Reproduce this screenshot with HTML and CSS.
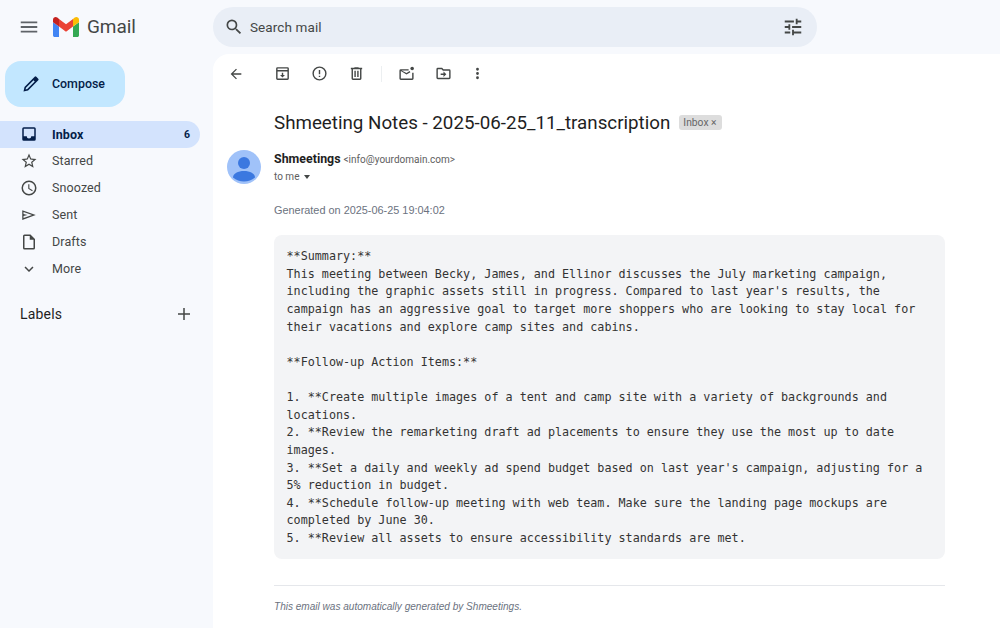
FILE: index.html
```html
<!DOCTYPE html>
<html lang="en">
<head>
<meta charset="utf-8">
<title>Gmail</title>
<link rel="stylesheet" href="styles.css">
</head>
<body>
<div class="app">
  <aside class="sidebar">
    <div class="brand">
      <svg class="menu-icon" viewBox="0 0 24 24" width="22" height="22"><path d="M3 18h18v-2H3v2zm0-5h18v-2H3v2zm0-7v2h18V6H3z" fill="#5f6368"/></svg>
      <svg class="logo" viewBox="0 0 26 20" width="26" height="20">
        <path d="M1.8 20H6V9.6L0 5.2V18.2C0 19.2.8 20 1.8 20Z" fill="#4285f4"/>
        <path d="M20 20h4.2c1 0 1.8-.8 1.8-1.8V5.2L20 9.6V20Z" fill="#34a853"/>
        <path d="M20 2v7.6l6-4.4V2.8C26 .6 23.5-.7 21.700.6L20 2Z" fill="#fbbc04"/>
        <path d="M6 9.600V2l7 5.200L20 2v7.600l-7 5.200L6 9.600Z" fill="#ea4335"/>
        <path d="M0 2.800v2.400l6 4.400V2L4.300.6C2.500-.7 0 .6 0 2.800Z" fill="#c5221f"/>
      </svg>
      <span class="wordmark">Gmail</span>
    </div>
    <button class="compose">
      <svg viewBox="0 0 24 24" width="20" height="20"><path d="M20.700 5.600 18.400 3.300a1.400 1.400 0 0 0-2 0L4.200 15.500 3 21l5.500-1.200L20.700 7.600a1.400 1.400 0 0 0 0-2ZM7.500 18l-2 .5.500-2 9-9 1.500 1.500-9 9Z" fill="#041e49"/></svg>
      <span>Compose</span>
    </button>
    <nav class="nav">
      <a class="nav-item active">
        <svg viewBox="0 0 24 24" width="18" height="18"><path d="M19 3H5a2 2 0 0 0-2 2v14a2 2 0 0 0 2 2h14a2 2 0 0 0 2-2V5a2 2 0 0 0-2-2Zm0 12h-4a3 3 0 0 1-6 0H5V5h14v10Z" fill="#041e49"/></svg>
        <span class="nav-label">Inbox</span><span class="count">6</span>
      </a>
      <a class="nav-item">
        <svg viewBox="0 0 24 24" width="18" height="18"><path d="m22 9.240-7.190-.620L12 2 9.190 8.630 2 9.240l5.460 4.730L5.820 21 12 17.270 18.180 21l-1.630-7.030L22 9.240ZM12 15.400l-3.760 2.270 1-4.280-3.320-2.880 4.380-.38L12 6.100l1.710 4.040 4.380.38-3.320 2.880 1 4.280L12 15.400Z" fill="#444746"/></svg>
        <span class="nav-label">Starred</span>
      </a>
      <a class="nav-item">
        <svg viewBox="0 0 24 24" width="18" height="18"><path d="M12 2a10 10 0 1 0 0 20 10 10 0 0 0 0-20Zm0 18a8 8 0 1 1 0-16 8 8 0 0 1 0 16Zm.5-13H11v6l5.200 3.200.8-1.300-4.500-2.700V7Z" fill="#444746"/></svg>
        <span class="nav-label">Snoozed</span>
      </a>
      <a class="nav-item">
        <svg viewBox="0 0 24 24" width="18" height="18"><path d="M3 5.500 21 12 3 18.500v-13Zm1.700 2.400v2.700L10 12l-5.300 1.400v2.700L16 12 4.700 7.900Z" fill="#444746"/></svg>
        <span class="nav-label">Sent</span>
      </a>
      <a class="nav-item">
        <svg viewBox="0 0 24 24" width="18" height="18"><path d="M14 2H6a2 2 0 0 0-2 2v16a2 2 0 0 0 2 2h12a2 2 0 0 0 2-2V8l-6-6Zm4 18H6V4h7v5h5v11Z" fill="#444746"/></svg>
        <span class="nav-label">Drafts</span>
      </a>
      <a class="nav-item">
        <svg viewBox="0 0 24 24" width="18" height="18"><path d="M7.400 8.600 12 13.200l4.600-4.600L18 10l-6 6-6-6 1.400-1.400Z" fill="#444746"/></svg>
        <span class="nav-label">More</span>
      </a>
    </nav>
    <div class="labels">
      <span>Labels</span>
      <svg viewBox="0 0 24 24" width="18" height="18"><path d="M20 13h-7v7h-2v-7H4v-2h7V4h2v7h7v2Z" fill="#444746"/></svg>
    </div>
  </aside>
  <div class="column">
    <header class="topbar">
      <div class="search">
        <svg viewBox="0 0 24 24" width="20" height="20"><path d="M15.500 14h-.79l-.28-.27A6.471 6.471 0 0 0 16 9.500 6.500 6.500 0 1 0 9.500 16c1.610 0 3.090-.59 4.230-1.570l.27.28v.79l5 4.990L20.490 19l-4.990-5Zm-6 0C7.010 14 5 11.990 5 9.500S7.010 5 9.500 5 14 7.010 14 9.500 11.990 14 9.500 14Z" fill="#444746"/></svg>
        <span class="search-text">Search mail</span>
        <svg class="tune" viewBox="0 0 24 24" width="22" height="22"><path d="M3 17v2h6v-2H3ZM3 5v2h10V5H3Zm10 16v-2h8v-2h-8v-2h-2v6h2ZM7 9v2H3v2h4v2h2V9H7Zm14 4v-2H11v2h10Zm-6-4h2V7h4V5h-4V3h-2v6Z" fill="#444746"/></svg>
      </div>
    </header>
    <main class="panel">
      <div class="toolbar">
        <svg class="back" viewBox="0 0 24 24" width="16" height="16"><path d="M20 11H7.800l5.600-5.600L12 4l-8 8 8 8 1.400-1.400L7.800 13H20v-2Z" fill="#444746"/></svg>
        <div class="tools">
          <svg viewBox="0 0 24 24" width="17" height="17"><path d="M19 3H5a2 2 0 0 0-2 2v14a2 2 0 0 0 2 2h14a2 2 0 0 0 2-2V5a2 2 0 0 0-2-2Zm0 2v2H5V5h14ZM5 19V9h14v10H5Zm8-8h-2v3H8.500l3.500 3.500 3.500-3.500H13v-3Z" fill="#444746"/></svg>
          <svg viewBox="0 0 24 24" width="17" height="17"><path d="M12 2a10 10 0 1 0 0 20 10 10 0 0 0 0-20Zm0 18a8 8 0 1 1 0-16 8 8 0 0 1 0 16Zm-1-5h2v2h-2v-2Zm0-8h2v6h-2V7Z" fill="#444746"/></svg>
          <svg viewBox="0 0 24 24" width="17" height="17"><path d="M15 4V3H9v1H4v2h1v13a2 2 0 0 0 2 2h10a2 2 0 0 0 2-2V6h1V4h-5Zm2 15H7V6h10v13ZM9 8h2v9H9V8Zm4 0h2v9h-2V8Z" fill="#444746"/></svg>
          <i class="divider"></i>
          <svg viewBox="0 0 24 24" width="17" height="17"><path d="M15 6H4a2 2 0 0 0-2 2v11a2 2 0 0 0 2 2h16a2 2 0 0 0 2-2v-8h-2v8H4V8.500l8 5 5.500-3.400-1-1.700L12 11.300 5 7.900h10V6Z" fill="#444746"/><circle cx="20" cy="5" r="2.500" fill="#444746"/></svg>
          <svg viewBox="0 0 24 24" width="17" height="17"><path d="M20 6h-8l-2-2H4a2 2 0 0 0-2 2v12a2 2 0 0 0 2 2h16a2 2 0 0 0 2-2V8a2 2 0 0 0-2-2Zm0 12H4V6h5.200l2 2H20v10Zm-8-1 4-4-4-4v3H8v2h4v3Z" fill="#444746"/></svg>
          <svg class="dots" viewBox="0 0 24 24" width="17" height="17"><path d="M12 8a2 2 0 1 0 0-4 2 2 0 0 0 0 4Zm0 2a2 2 0 1 0 0 4 2 2 0 0 0 0-4Zm0 6a2 2 0 1 0 0 4 2 2 0 0 0 0-4Z" fill="#444746"/></svg>
        </div>
      </div>
      <div class="subject">
        <h1>Shmeeting Notes - 2025-06-25_11_transcription</h1>
        <span class="tag">Inbox <b>×</b></span>
      </div>
      <div class="sender">
        <svg class="avatar" viewBox="0 0 34 34" width="34" height="34"><circle cx="17" cy="17" r="17" fill="#a0c2f9"/><circle cx="17" cy="13" r="6" fill="#3b78e0"/><path d="M6 27.500C6 23.500 11 21 17 21s11 2.500 11 6.500a17 17 0 0 1-22 0Z" fill="#3b78e0"/></svg>
        <div class="who">
          <div class="from"><strong>Shmeetings</strong> <span>&lt;info@yourdomain.com&gt;</span></div>
          <div class="to">to me <i class="caret"></i></div>
        </div>
      </div>
      <p class="generated">Generated on 2025-06-25 19:04:02</p>
      <pre class="body">**Summary:**
This meeting between Becky, James, and Ellinor discusses the July marketing campaign,
including the graphic assets still in progress. Compared to last year's results, the
campaign has an aggressive goal to target more shoppers who are looking to stay local for
their vacations and explore camp sites and cabins.

**Follow-up Action Items:**

1. **Create multiple images of a tent and camp site with a variety of backgrounds and
locations.
2. **Review the remarketing draft ad placements to ensure they use the most up to date
images.
3. **Set a daily and weekly ad spend budget based on last year's campaign, adjusting for a
5% reduction in budget.
4. **Schedule follow-up meeting with web team. Make sure the landing page mockups are
completed by June 30.
5. **Review all assets to ensure accessibility standards are met.</pre>
      <p class="footer">This email was automatically generated by Shmeetings.</p>
    </main>
  </div>
</div>
</body>
</html>
```
FILE: styles.css
```css
* { box-sizing: border-box; }
html, body { margin: 0; height: 100%; }
body {
  width: 1000px;
  height: 628px;
  overflow: hidden;
  background: #f7f9fd;
  font-family: Roboto, "Liberation Sans", sans-serif;
  color: #1f1f1f;
}
.app { display: flex; height: 628px; }

/* Sidebar */
.sidebar { width: 213px; flex: none; }
.brand { height: 54px; display: flex; align-items: center; padding-left: 18px; }
.logo { margin-left: 13px; }
.wordmark { margin-left: 8px; font: 19px/24px Roboto, sans-serif; color: #444746; letter-spacing: -0.1px; }
.compose {
  display: flex; align-items: center;
  width: 120px; height: 46px;
  margin: 7px 0 14px 5px;
  padding: 0 0 1px 16px;
  border: 0; border-radius: 16px;
  background: #c2e7ff;
  color: #041e49;
  font: 500 12.400px Roboto, sans-serif;
}
.compose span { margin-left: 11px; }
.nav { width: 200px; }
.nav-item {
  display: flex; align-items: center;
  height: 27px;
  padding: 0 10px 2px 20px;
  border-radius: 0 14px 14px 0;
  font-size: 12.500px;
  color: #444746;
  letter-spacing: 0.1px;
}
.nav-item svg { flex: none; }
.nav-label { margin-left: 14px; flex: 1; }
.active { background: #d3e3fd; color: #041e49; font-weight: 700; padding-bottom: 1px; }
.count { font-size: 10.500px; }
.labels {
  width: 200px;
  display: flex; align-items: center; justify-content: space-between;
  margin-top: 18px;
  padding: 0 7px 2px 20px;
  height: 27px;
  font-size: 14px;
  letter-spacing: 0.2px;
  color: #1f1f1f;
}

/* Top bar */
.column { flex: 1; min-width: 0; display: flex; flex-direction: column; }
.topbar { height: 54px; flex: none; padding-top: 7px; }
.search {
  display: flex; align-items: center;
  width: 604px; height: 40px;
  padding: 0 13px 0 11px;
  border-radius: 20px;
  background: #e9eef6;
}
.search-text { margin-left: 6px; flex: 1; font-size: 13.500px; color: #444746; letter-spacing: 0.1px; }

/* Message panel */
.panel { flex: 1; background: #fff; border-radius: 16px 0 0 0; padding-left: 61px; padding-right: 55px; }
.toolbar { height: 39px; display: flex; align-items: center; margin-left: -47px; margin-bottom: 1px; }
.back { margin-left: 1px; }
.tools { margin-left: 30px; display: flex; align-items: center; gap: 20px; }
.divider { width: 1px; height: 16px; background: #eceff1; margin: 0 -3.500px 0 -4.500px; }
.dots { margin-left: -3px; }
.subject { display: flex; align-items: center; height: 20px; margin-top: 19px; }
h1 { margin: 0; padding-top: 1px; font: 400 18.750px/26px Roboto, sans-serif; color: #1f1f1f; }
.tag {
  margin-left: 9px; padding: 0 5px 0 4px;
  height: 15px;
  border-radius: 3px;
  background: #ddd;
  font-size: 10.300px; line-height: 15px;
  color: #666;
}
.tag b { font-weight: 400; }
.sender { display: flex; margin: 18px 0 0 -47px; }
.who { margin-left: 13px; padding-top: 1px; }
.from { font-size: 12px; line-height: 16px; }
.from strong { font-weight: 700; font-size: 12.400px; color: #1f1f1f; }
.from span { font-size: 10px; color: #5e5e5e; }
.to { margin-top: 2px; font-size: 10px; line-height: 14px; color: #5e5e5e; display: flex; align-items: center; gap: 5px; }
.caret { width: 0; height: 0; border: 3.500px solid transparent; border-top: 4px solid #444746; border-bottom: 0; }
.generated { margin: 19px 0 0; font: 10.900px/14px "Liberation Sans", Arial, sans-serif; color: #6b7280; }
.body {
  margin: 18px 0 0;
  padding: 13px 12.500px 0;
  height: 324px;
  border-radius: 8px;
  background: #f3f4f6;
  font: 11.740px/17.620px "DejaVu Sans Mono", monospace;
  color: #333;
  white-space: pre;
}
.footer {
  margin: 26px 0 0;
  padding-top: 14px;
  border-top: 1px solid #e5e7eb;
  font: italic 10.050px/14px "Liberation Sans", Arial, sans-serif;
  color: #6b7280;
}
```
